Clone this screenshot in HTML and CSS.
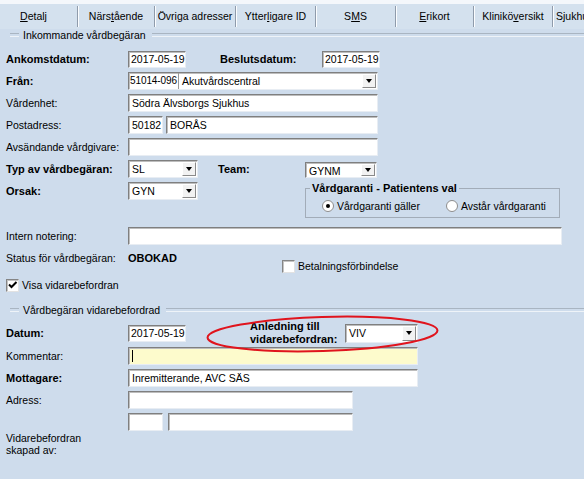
FILE: index.html
```html
<!DOCTYPE html>
<html lang="sv">
<head>
<meta charset="utf-8">
<title>Vårdbegäran</title>
<link rel="stylesheet" href="styles.css">
</head>
<body>
<div class="tabs">
  <div class="tab tab-detalj active"><u>D</u>etalj</div>
  <div class="tab tab-narst">Närs<u>t</u>ående</div>
  <div class="tab tab-ovriga">Övri<u>g</u>a adresser</div>
  <div class="tab tab-ytter">Ytter<u>l</u>igare ID</div>
  <div class="tab tab-sms">S<u>M</u>S</div>
  <div class="tab tab-erikort"><u>E</u>rikort</div>
  <div class="tab tab-klinik">Klinikö<u>v</u>ersikt</div>
  <div class="tab tab-sjukhus">Sjukhus</div>
</div>

<main class="page">
  <div class="group-head"><span class="group-title">Inkommande vårdbegäran</span></div>

  <div class="row row-first">
    <span class="lbl b">Ankomstdatum:</span>
    <span class="inp date">2017-05-19</span>
    <span class="lbl-beslut b">Beslutsdatum:</span>
    <span class="inp date">2017-05-19</span>
  </div>

  <div class="row">
    <span class="lbl b">Från:</span>
    <span class="inp sel w-wide">
      <span class="seg-code">51014-096</span>
      <span class="sel-text">Akutvårdscentral</span>
      <span class="ddbtn"></span>
    </span>
  </div>

  <div class="row">
    <span class="lbl">Vårdenhet:</span>
    <span class="inp w-wide">Södra Älvsborgs Sjukhus</span>
  </div>

  <div class="row">
    <span class="lbl">Postadress:</span>
    <span class="inp zip">50182</span>
    <span class="inp city">BORÅS</span>
  </div>

  <div class="row">
    <span class="lbl">Avsändande vårdgivare:</span>
    <span class="inp w-wide"></span>
  </div>

  <div class="grid-typ">
    <span class="cell-lbl lbl b typ-lbl">Typ av vårdbegäran:</span>
    <span class="inp sel typ-sel"><span class="sel-text sans">SL</span><span class="ddbtn"></span></span>
    <span class="cell-lbl b team-lbl">Team:</span>
    <span class="inp sel team-sel"><span class="sel-text sans">GYNM</span><span class="ddbtn"></span></span>
    <span class="cell-lbl lbl b orsak-lbl">Orsak:</span>
    <span class="inp sel orsak-sel"><span class="sel-text sans">GYN</span><span class="ddbtn"></span></span>
    <fieldset class="garanti">
      <legend class="b">Vårdgaranti - Patientens val</legend>
      <div class="radios">
        <span class="radio-item"><span class="radio checked"></span>Vårdgaranti gäller</span>
        <span class="radio-item radio-second"><span class="radio"></span>Avstår vårdgaranti</span>
      </div>
    </fieldset>
  </div>

  <div class="row row-intern">
    <span class="lbl">Intern notering:</span>
    <span class="inp intern"></span>
  </div>

  <div class="row row-status">
    <span class="lbl">Status för vårdbegäran:</span>
    <span class="status-val b">OBOKAD</span>
    <span class="check-item betal"><span class="checkbox"></span>Betalningsförbindelse</span>
  </div>

  <div class="row row-visa">
    <span class="check-item"><span class="checkbox"><svg class="tick" viewBox="0 0 11 11" width="11" height="11"><path d="M2 4.5 L4.5 7 L9.5 2" fill="none" stroke="#000" stroke-width="2"/></svg></span>Visa vidarebefordran</span>
  </div>

  <div class="group-head group-second"><span class="group-title">Vårdbegäran vidarebefordrad</span></div>

  <div class="row row-datum">
    <span class="lbl b">Datum:</span>
    <span class="inp date">2017-05-19</span>
    <span class="lbl-anledning b">Anledning till<br>vidarebefordran:</span>
    <span class="inp sel viv-sel"><span class="sel-text sans">VIV</span><span class="ddbtn"></span></span>
  </div>

  <div class="row row-komm">
    <span class="lbl">Kommentar:</span>
    <span class="inp komm"><span class="caret"></span></span>
  </div>

  <div class="row">
    <span class="lbl b">Mottagare:</span>
    <span class="inp komm-w">Inremitterande, AVC SÄS</span>
  </div>

  <div class="row">
    <span class="lbl">Adress:</span>
    <span class="inp adr"></span>
  </div>

  <div class="row">
    <span class="lbl"></span>
    <span class="inp zip"></span>
    <span class="inp adr-city"></span>
  </div>

  <div class="skapad">Vidarebefordran<br>skapad av:</div>
</main>

<svg class="markup" width="584" height="479" viewBox="0 0 584 479">
  <ellipse cx="322.5" cy="334" rx="115" ry="17" transform="rotate(-1.8 322.5 334)" fill="none" stroke="#e0141d" stroke-width="2"/>
</svg>
</body>
</html>
```

FILE: styles.css
```css
* { box-sizing: border-box; }

html, body { margin: 0; padding: 0; }

body {
  width: 584px;
  height: 479px;
  overflow: hidden;
  position: relative;
  background: #cedcec;
  color: #000;
  font-family: "Liberation Sans", Arial, sans-serif;
  font-size: 10.5px;
}

.b { font-weight: bold; font-size: 11px; }
.sans { font-family: "Liberation Sans", sans-serif; font-size: 10.5px; }

/* ---------- tabs ---------- */
.tabs {
  display: flex;
  height: 29px;
  border-top: 4px solid #f4f7fb;
  background: #d4e1ee;
}
.tab {
  flex: none;
  height: 21px;
  margin-top: 2px;
  line-height: 21px;
  text-align: center;
  white-space: nowrap;
  overflow: hidden;
  border-right: 1px solid #8f9bab;
  box-shadow: 1px 0 0 #fbfdff;
}
.tab u { text-underline-offset: 1px; }
.tab-detalj { width: 78px; padding-right: 10px; }
.tab-narst { width: 77px; }
.tab-ovriga { width: 81px; }
.tab-ytter { width: 80px; }
.tab-sms { width: 80px; }
.tab-erikort { width: 78px; }
.tab-klinik { width: 79px; }
.tab-sjukhus { flex: 1; text-align: left; padding-left: 3px; border-right: 0; box-shadow: none; }

/* ---------- page ---------- */
.page { padding-left: 6px; }

.group-head {
  display: flex;
  align-items: center;
  height: 12px;
}
.group-head::before,
.group-head::after {
  content: "";
  height: 2px;
  border-top: 1px solid #a9b5c2;
  border-bottom: 1px solid #eef3f8;
}
.group-head::before { width: 9px; margin-left: 4px; }
.group-head::after { flex: 1; margin-left: 6px; }
.group-title { margin-left: 4px; white-space: nowrap; }
.group-second { margin-top: 12px; }

.row {
  display: flex;
  align-items: center;
  height: 18px;
  margin-top: 4px;
}
.row-first { margin-top: 9px; }

.lbl { flex: none; width: 122px; white-space: nowrap; }

.inp {
  flex: none;
  display: block;
  height: 18px;
  line-height: 16px;
  padding-left: 3px;
  background: #fff;
  border: 1px solid;
  border-color: #7f7f7f #e8edf3 #e8edf3 #7f7f7f;
  box-shadow: inset 1px 1px 0 #bdbdbd;
  white-space: nowrap;
  overflow: hidden;
}
.date { width: 58px; height: 17px; line-height: 15px; padding-left: 2px; }
.lbl-beslut { width: 102px; margin-left: 34px; }

.w-wide { width: 250px; }
.zip { width: 35px; }
.city { width: 212px; margin-left: 3px; }

/* select */
.sel { display: flex; align-items: stretch; padding-left: 0; }
.sel-text { flex: 1; padding-left: 3px; overflow: hidden; }
.seg-code {
  flex: none;
  width: 50px;
  padding-left: 1px;
  font-size: 10px;
  letter-spacing: -0.1px;
  white-space: nowrap;
  overflow: hidden;
  border-right: 1px solid #9a9a9a;
}
.ddbtn {
  flex: none;
  width: 14px;
  margin: 1px 1px 1px 0;
  background: #f2f2f2;
  border: 1px solid;
  border-color: #ffffff #8a8a8a #8a8a8a #ffffff;
  display: flex;
  align-items: center;
  justify-content: center;
}
.ddbtn::after {
  content: "";
  border-left: 3px solid transparent;
  border-right: 3px solid transparent;
  border-top: 4px solid #000;
}

/* typ / orsak / team grid */
.grid-typ {
  display: grid;
  grid-template-columns: 122px 70px 20px 87px 255px;
  grid-template-rows: 18px auto;
  row-gap: 4px;
  margin-top: 4px;
  align-items: start;
}
.cell-lbl { height: 18px; display: flex; align-items: center; white-space: nowrap; }
.typ-lbl { grid-column: 1; grid-row: 1; }
.typ-sel { grid-column: 2; grid-row: 1; }
.team-lbl { grid-column: 4; grid-row: 1; }
.team-sel { grid-column: 5; grid-row: 1; width: 72px; height: 16px; align-self: end; }
.orsak-lbl { grid-column: 1; grid-row: 2; }
.orsak-sel { grid-column: 2; grid-row: 2; }

.garanti {
  grid-column: 5;
  grid-row: 2;
  margin: 0;
  min-width: 0;
  padding: 4px 0 5px 4px;
  border: 1px solid #a2acb8;
}
.garanti legend {
  padding: 0 2px;
  line-height: 13px;
}
.radios { display: flex; align-items: center; height: 13px; padding-left: 12px; }
.radio-item { display: flex; align-items: center; white-space: nowrap; }
.radio-second { margin-left: 26px; }
.radio {
  width: 12px;
  height: 12px;
  margin-right: 3px;
  border-radius: 50%;
  background: #fff;
  border: 1px solid #8d8d8d;
  display: flex;
  align-items: center;
  justify-content: center;
}
.radio.checked::after {
  content: "";
  width: 4px;
  height: 4px;
  border-radius: 50%;
  background: #000;
}

.row-intern { margin-top: 9px; }
.intern { width: 434px; }

.row-status { align-items: flex-start; }
.row-status .lbl { line-height: 18px; }
.status-val { width: 154px; line-height: 18px; flex: none; }

.check-item { display: flex; align-items: center; white-space: nowrap; line-height: 13px; }
.betal { margin-top: 11px; }
.checkbox {
  flex: none;
  width: 13px;
  height: 13px;
  margin-right: 3px;
  background: #fff;
  border: 1px solid;
  border-color: #858585 #e2e2e2 #e2e2e2 #858585;
  box-shadow: inset 1px 1px 0 #c4c4c4;
  display: flex;
  align-items: center;
  justify-content: center;
}
.tick { display: block; }

.row-visa { margin-top: 12px; height: 13px; }

.row-datum { margin-top: 8px; }
.lbl-anledning {
  flex: none;
  width: 95px;
  margin-left: 64px;
  line-height: 13px;
  white-space: nowrap;
}
.viv-sel { width: 73px; height: 19px; }

.row-komm { margin-top: 5px; }
.komm { width: 290px; background: #fdfbcc; display: flex; align-items: center; }
.caret { width: 1px; height: 12px; background: #000; }
.komm-w { width: 290px; }
.adr { width: 225px; }
.adr-city { width: 185px; margin-left: 5px; }

.skapad { margin-top: 1px; line-height: 12px; }

/* annotation overlay */
.markup {
  position: absolute;
  left: 0;
  top: 0;
  pointer-events: none;
}
```
